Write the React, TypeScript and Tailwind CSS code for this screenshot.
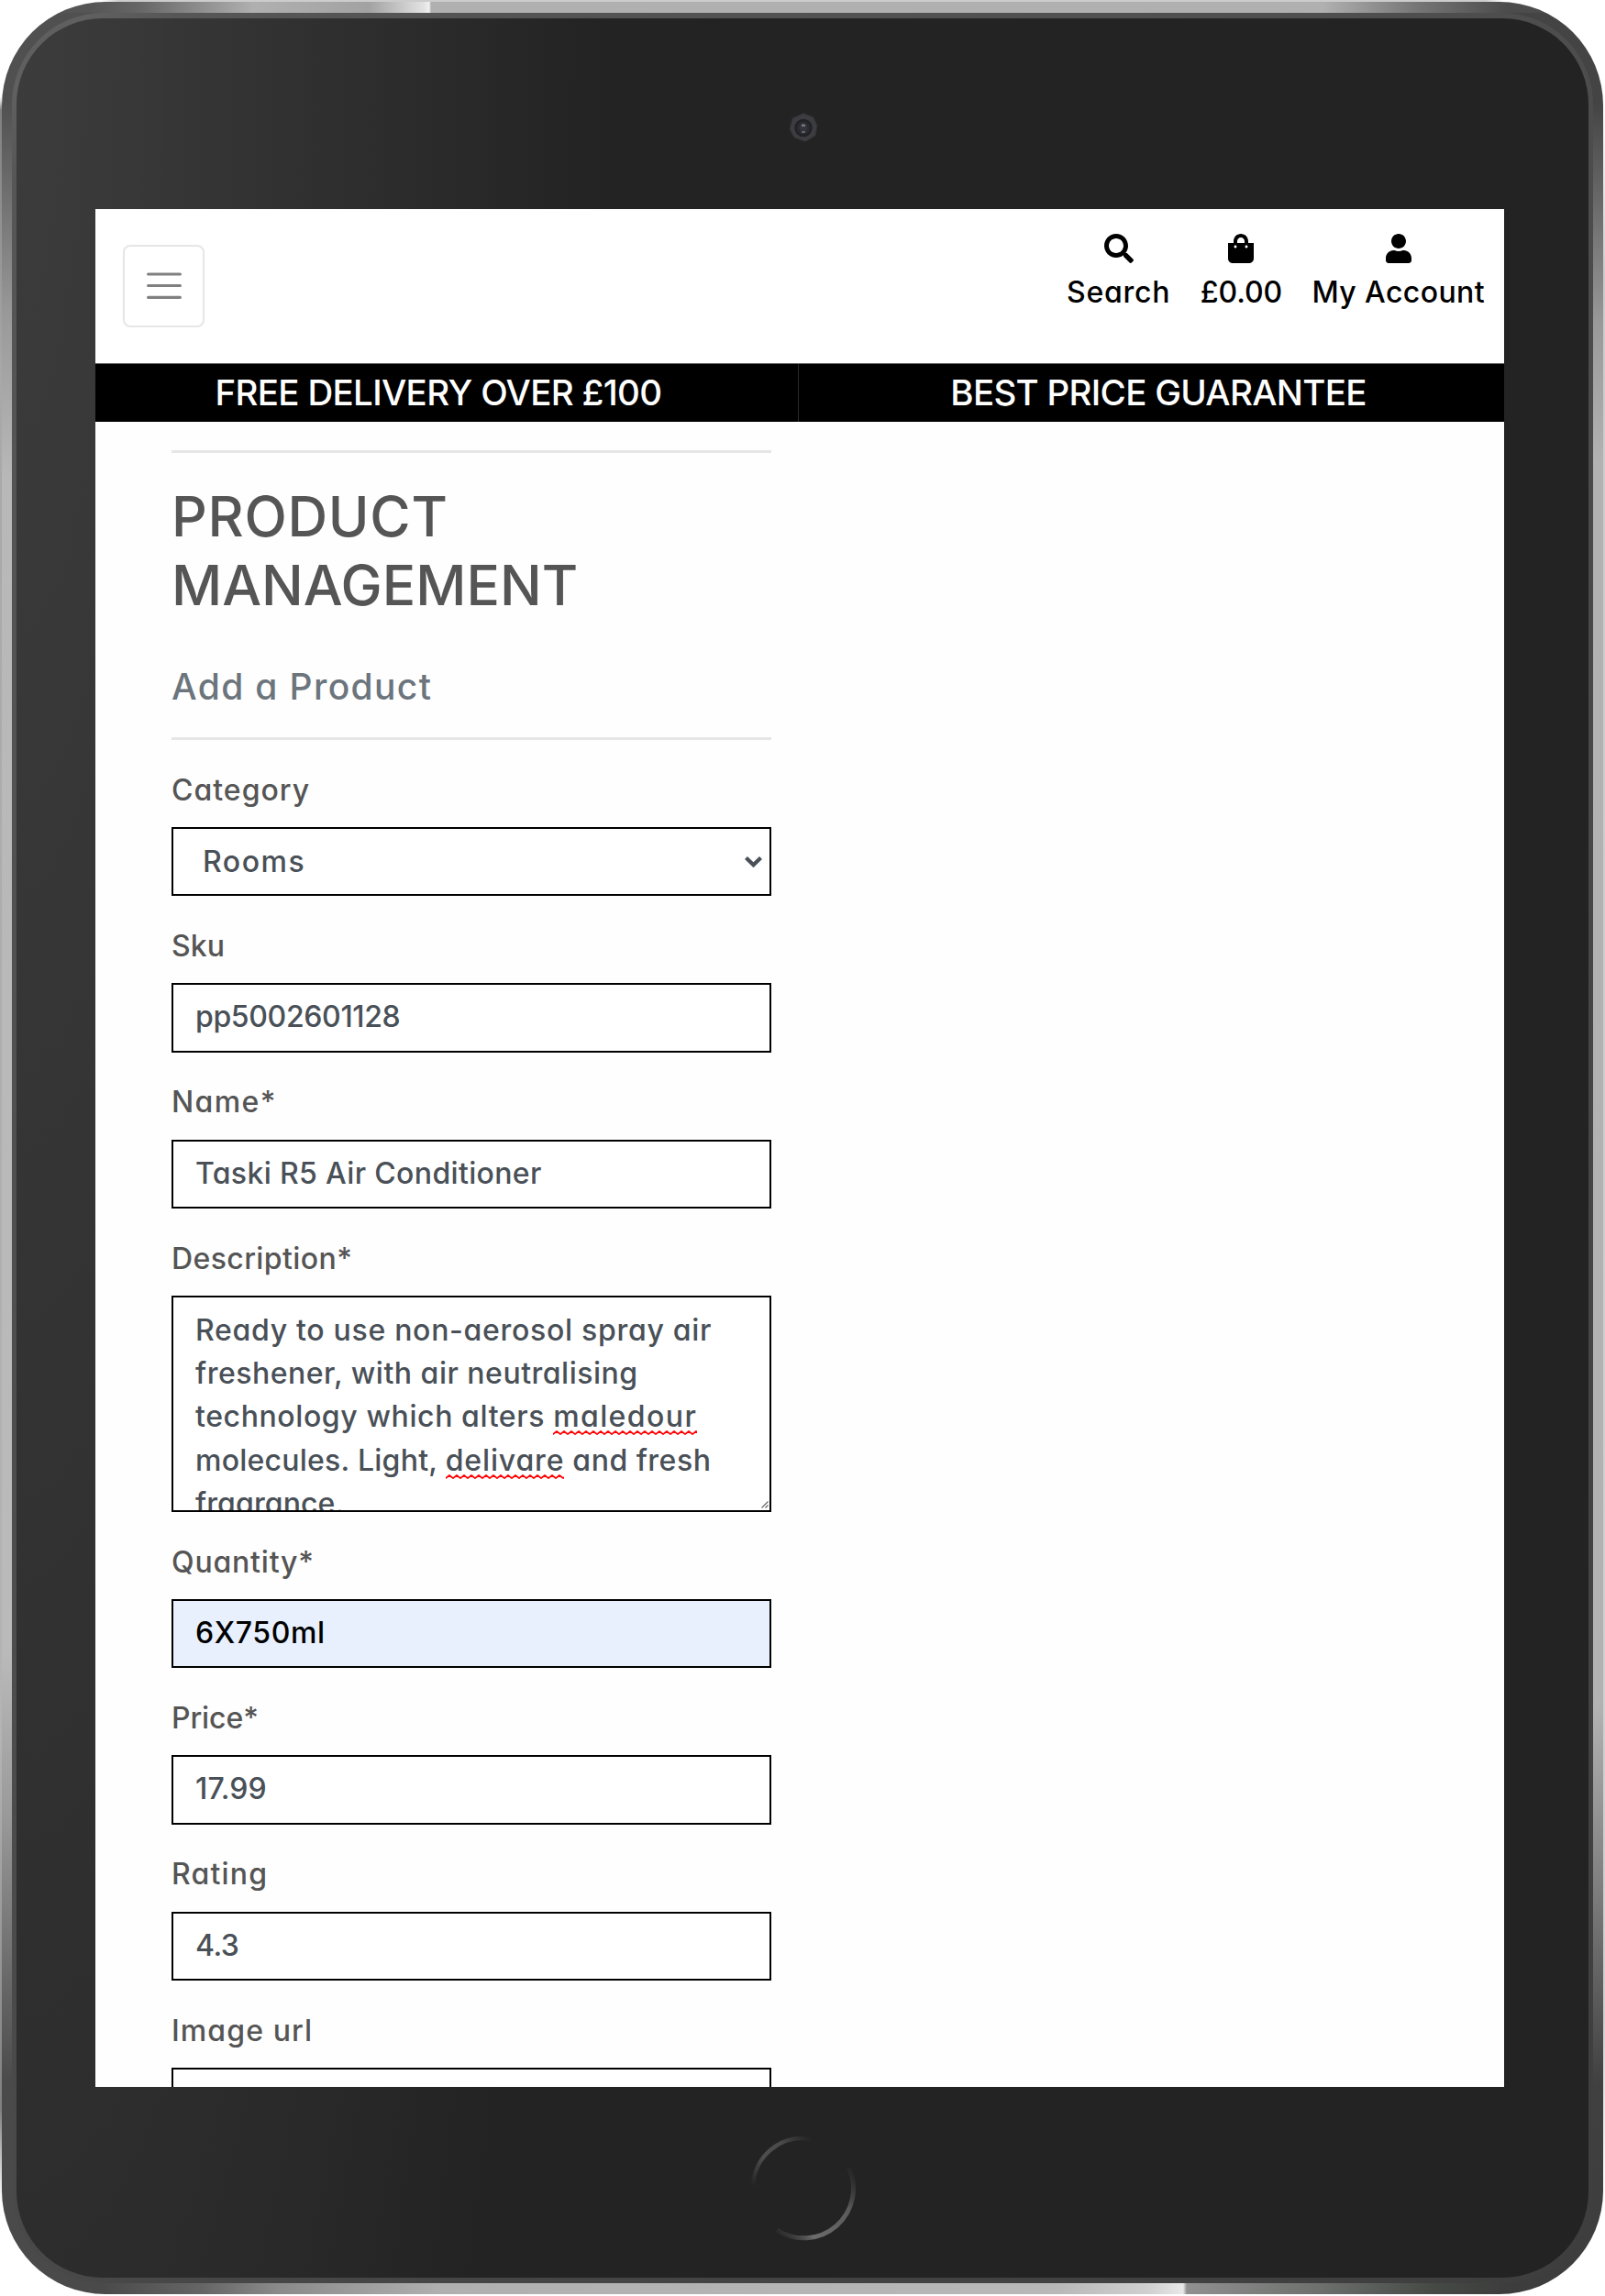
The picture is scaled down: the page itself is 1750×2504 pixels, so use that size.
import React from "react";
import { FaSearch, FaShoppingBag, FaUser } from "react-icons/fa";

function Squiggle({ id }: { id: string }) {
  return (
    <svg className="absolute left-0 top-[39px] h-[5px] w-full" aria-hidden="true">
      <defs>
        <pattern id={id} width="8" height="5" patternUnits="userSpaceOnUse">
          <path d="M-2 2.5 L0 4 L4 1 L8 4 L10 2.5" fill="none" stroke="#ff0000" strokeWidth="1.8" />
        </pattern>
      </defs>
      <rect width="100%" height="5" fill={`url(#${id})`} />
    </svg>
  );
}

function Misspelt({ id, className, children }: { id: string; className: string; children: string }) {
  return (
    <span className={`relative inline-block ${className}`}>
      {children}
      <Squiggle id={id} />
    </span>
  );
}

function Label({ text, className }: { text: string; className: string }) {
  return (
    <label className="block h-[94.88px] pt-[30.6px] leading-[47px] text-[#555]">
      <span className={className}>{text}</span>
    </label>
  );
}

function Field({
  text,
  className = "",
  box = "text-[#495057] bg-white",
}: {
  text: string;
  className?: string;
  box?: string;
}) {
  return (
    <div className={`flex h-[75.5px] items-center border-2 border-black pb-[1.5px] pl-[24px] ${box}`}>
      <span className={className}>{text}</span>
    </div>
  );
}

function Camera() {
  return (
    <svg className="size-[34px]" viewBox="0 0 34 34" aria-hidden="true">
      <path d="M17 1.5 L28 6 L32 15 L30 26 L19 32.5 L7 28 L2 19 L5 7 Z" fill="#3d3d41" stroke="#303033" strokeWidth="1" />
      <circle cx="17" cy="17.5" r="8.5" fill="#2a2a31" stroke="#212126" strokeWidth="2.5" />
      <circle cx="17" cy="17" r="4.5" fill="#34343c" />
      <rect x="15" y="13.5" width="4" height="2.5" fill="#77777c" />
      <rect x="15" y="21" width="4" height="2" fill="#606068" />
    </svg>
  );
}

function HomeButton() {
  return (
    <svg className="size-[116px]" viewBox="0 0 116 116" fill="none" aria-hidden="true">
      <defs>
        <linearGradient id="arcTop" gradientUnits="userSpaceOnUse" x1="4" y1="56" x2="68" y2="4">
          <stop offset="0" stopColor="#555" stopOpacity="0" />
          <stop offset="0.35" stopColor="#4e4e4e" />
          <stop offset="0.65" stopColor="#4a4a4a" />
          <stop offset="1" stopColor="#444" stopOpacity="0" />
        </linearGradient>
        <linearGradient id="arcBottom" gradientUnits="userSpaceOnUse" x1="112" y1="34" x2="28" y2="104">
          <stop offset="0" stopColor="#444" stopOpacity="0" />
          <stop offset="0.3" stopColor="#5a5a5a" />
          <stop offset="0.75" stopColor="#6c6c6c" />
          <stop offset="1" stopColor="#444" stopOpacity="0.2" />
        </linearGradient>
      </defs>
      <path d="M4 56 A54 54 0 0 1 68 4.9" stroke="url(#arcTop)" strokeWidth="4.5" />
      <path d="M108.5 36 A54 54 0 0 1 30 104" stroke="url(#arcBottom)" strokeWidth="5" />
    </svg>
  );
}

function NavItem({ icon, text, className }: { icon: React.ReactNode; text: string; className: string }) {
  return (
    <a className="flex flex-col items-center">
      <span className="flex h-8 items-center text-[32px]">{icon}</span>
      <span className={`mt-[8px] leading-[48px] ${className}`}>{text}</span>
    </a>
  );
}

function Screen() {
  return (
    <div className="h-[2048px] w-[1536px] overflow-hidden bg-[#fefefe] font-['Inter',sans-serif] text-[32px] font-medium [font-feature-settings:'cv11']">
      <header className="flex h-[168px] justify-between bg-white pl-[30px] pr-[21px]">
        <button className="mt-[39px] flex h-[90px] w-[89px] items-center justify-center rounded-lg border-2 border-[#e6e6e6]">
          <svg className="h-[30px] w-[38px]" viewBox="0 0 38 30" stroke="#808080" strokeWidth="3.2" strokeLinecap="round" aria-hidden="true">
            <path d="M1.6 2H36.4M1.6 14.5H36.4M1.6 27.3H36.4" />
          </svg>
        </button>
        <nav className="flex gap-[32.5px] pt-[27px] text-black">
          <NavItem icon={<FaSearch />} text="Search" className="tracking-[0.75px]" />
          <NavItem icon={<FaShoppingBag />} text="£0.00" className="tracking-[-0.1px]" />
          <NavItem icon={<FaUser />} text="My Account" className="tracking-[0.4px]" />
        </nav>
      </header>

      <div className="flex h-[64px] border-t border-[#666] bg-black text-[38.5px] leading-[63px] text-white">
        <div className="w-[767px] border-r border-[#2a2a2a] pr-[18px] text-center tracking-[-0.68px]">FREE DELIVERY OVER £100</div>
        <div className="flex-1 pl-[22px] pr-[7px] text-center tracking-[-0.7px]">BEST PRICE GUARANTEE</div>
      </div>

      <main className="ml-[83px] w-[654px] pt-[31px]">
        <hr className="h-[3px] border-0 bg-[#e6e6e6]" />
        <h2 className="mt-[32px] text-[60.5px] leading-[75px] text-[#555]">
          <span className="block tracking-[0.7px]">PRODUCT</span>
          <span className="block">MANAGEMENT</span>
        </h2>
        <h5 className="mt-[50px] text-[39px] leading-[46px] tracking-[1.35px] text-[#6c757d]">Add a Product</h5>
        <hr className="mt-[32px] h-[3px] border-0 bg-[#e6e6e6]" />

        <form>
          <Label text="Category" className="tracking-[1px]" />
          <div className="flex h-[75.5px] items-center justify-between border-2 border-black bg-white pl-[32px] pr-[7px] text-[#495057]">
            <span className="tracking-[1.5px]">Rooms</span>
            <svg className="h-[14px] w-[21px]" viewBox="0 0 21 14" fill="none" stroke="#495057" strokeWidth="4.2" aria-hidden="true">
              <path d="M2.5 2.5L10.5 10.3L18.5 2.5" />
            </svg>
          </div>

          <Label text="Sku" className="tracking-[0.1px]" />
          <Field text="pp5002601128" className="tracking-[-0.35px]" />

          <Label text="Name*" className="tracking-[1.4px]" />
          <Field text="Taski R5 Air Conditioner" className="tracking-[0.35px]" />

          <Label text="Description*" className="tracking-[0.4px]" />
          <div className="relative h-[236px] overflow-hidden whitespace-nowrap border-2 border-black bg-white pl-[24px] pt-[11.5px] leading-[47.4px] text-[#495057]">
            <div className="h-[47.4px] tracking-[0.7px]">Ready to use non-aerosol spray air</div>
            <div className="h-[47.4px] tracking-[0.5px]">freshener, with air neutralising</div>
            <div className="h-[47.4px] whitespace-pre">
              <span className="tracking-[0.6px]">technology which alters </span>
              <Misspelt id="waveA" className="tracking-[1.4px]">maledour</Misspelt>
            </div>
            <div className="h-[47.4px] whitespace-pre">
              <span className="tracking-[0.24px]">molecules. Light, </span>
              <Misspelt id="waveB" className="tracking-[0.85px]">delivare</Misspelt>
              <span className="tracking-[0.5px]"> and fresh</span>
            </div>
            <div className="h-[47.4px] tracking-[0.1px]">fragrance.</div>
            <svg className="absolute bottom-[2px] right-[1px] size-[8px]" viewBox="0 0 8 8" stroke="#666" strokeWidth="1.2" aria-hidden="true">
              <path d="M0.5 7.5L7.5 0.5M4.5 7.5L7.5 4.5" />
            </svg>
          </div>

          <Label text="Quantity*" className="tracking-[0.8px]" />
          <Field text="6X750ml" className="tracking-[0.6px]" box="bg-[#e8f0fe] text-black" />

          <Label text="Price*" className="tracking-[-0.1px]" />
          <Field text="17.99" className="tracking-[0.1px]" />

          <Label text="Rating" className="tracking-[1.2px]" />
          <Field text="4.3" className="tracking-[-0.5px]" />

          <Label text="Image url" className="tracking-[1.1px]" />
          <Field text="" />
        </form>
      </main>
    </div>
  );
}

export default function App() {
  return (
    <div className="h-[2504px] w-[1750px] overflow-hidden bg-white">
      <div className="h-full w-full rounded-[116px] bg-[linear-gradient(90deg,transparent_110px,#ccc_130px,#ccc_1620px,transparent_1640px),linear-gradient(180deg,transparent_105px,#808080_120px,#a8a8a8_400px,#b4b4b4_1900px,#808080_2300px,transparent_2400px),linear-gradient(180deg,transparent_110px,#ccc_300px,#d0d0d0_2200px,transparent_2400px)] bg-[length:100%_2px,2px_100%,2px_100%] bg-[position:0_0,0_0,100%_0] bg-no-repeat p-[2px]">
        <div className="h-full w-full rounded-[113px] bg-[linear-gradient(90deg,#555_95px,#666_150px,#b0b0b0_275px,#a2a2a2_400px,#e2e2e2_460px,#f0f0f0_466px,#b0b0b0_468px,#b0b0b0_1440px,#777_1540px,#4c4c4c_1640px),linear-gradient(90deg,#4a4a4a_110px,#666_220px,#8a8a8a_300px,#b0b0b0_480px,#b8b8b8_1150px,#d0d0d0_1250px,#e8e8e8_1288px,#909090_1292px,#6c6f6c_1440px,#454a45_1560px,#3d3d3d_1640px),linear-gradient(180deg,#505050_110px,#666_180px,#999_340px,#b8b8b8_520px,#bababa_1800px,#999_1980px,#4a4a4a_2270px,#4a4a4a_100%),linear-gradient(180deg,#444_110px,#666_210px,#999_350px,#b2b2b2_500px,#b2b2b2_1860px,#808080_2050px,#404040_2270px,#3d3d3d_100%)] bg-[length:100%_12px,100%_12px,873px_100%,873px_100%] bg-[position:0_0,0_100%,0_0,100%_0] bg-no-repeat px-[11px] py-[12px]">
          <div className="h-full w-full rounded-[100px] bg-[linear-gradient(135deg,#5c5c5c_0,#606060_60px,#565656_130px,#4c4c4c_45%,#3e3e3e_100%)] px-[5px] py-[6px]">
            <div className="flex h-full w-full flex-col rounded-[94px] bg-[#232323] bg-[radial-gradient(ellipse_640px_3900px_at_0_0,#3c3c3c_0,#393939_15%,#232323_100%)]">
              <div className="flex h-[208px] justify-center pl-[2px] pt-[102px]">
                <Camera />
              </div>
              <div className="pl-[86px]">
                <Screen />
              </div>
              <div className="flex flex-1 justify-center pt-[52px]">
                <HomeButton />
              </div>
            </div>
          </div>
        </div>
      </div>
    </div>
  );
}
